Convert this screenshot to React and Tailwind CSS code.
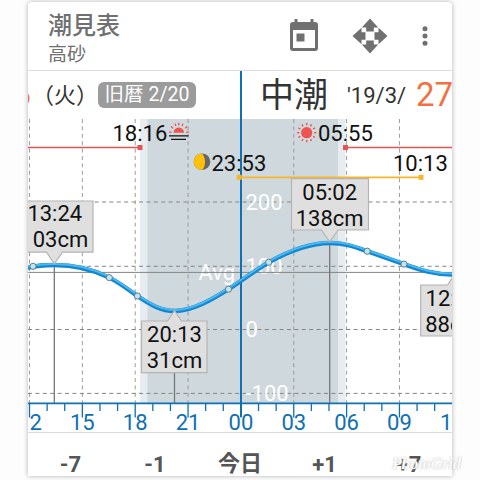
const HOURS = ["12", "15", "18", "21", "00", "03", "06", "09", "12"];
const LEVELS = [
  { y: 202, label: "200" },
  { y: 266.3, label: "100" },
  { y: 329.5, label: "0" },
  { y: 393.4, label: "-100" },
];
const POINTS = [
  [33, 266.3],
  [109.3, 277.6],
  [137.4, 296],
  [228.5, 289.2],
  [268.7, 262.3],
  [367.2, 251.2],
  [404, 264.1],
];
const CURVE =
  "M26 268 C36 265.5 45 265 54 265 C76 265 92 269 109.3 277.6 C121 283.5 128 289.5 137.4 296 C150 304.5 161 311 174.5 311 C193 311 213 299 228.5 289.2 C243 280 254 271 268.7 262.3 C290 250.5 312 243 330 243 C345 243 355 247 367.2 251.2 L404 264.1 C420 270 435 275 454 274.5";

const hourX = (i) => 29.5 + i * 52.85;

function Callout({ shape, x, y, time, level, levelX = x }) {
  return (
    <g>
      <path d={shape} fill="#dfdfdf" stroke="#b4b4b4" strokeWidth="1.2" />
      <text x={x} y={y} textAnchor="middle">{time}</text>
      <text x={levelX} y={y + 26} textAnchor="middle">{level}</text>
    </g>
  );
}

function Sun({ x, y, r }) {
  return (
    <g transform={`translate(${x} ${y})`}>
      <circle r={r} fill="#ef5350" />
      {[0, 30, 60, 90, 120, 150, 180, 210, 240, 270, 300, 330].map((a) => (
        <line key={a} y1={-r - 1.8} y2={-r - 4} stroke="#ef5350" strokeWidth="1.4" transform={`rotate(${a})`} />
      ))}
    </g>
  );
}

function TideChart() {
  return (
    <svg className="block h-[313px] w-[424px] font-[Roboto,sans-serif]" viewBox="28 119 424 313" fontSize="22" fill="#111">
      <rect x="140" y="119" width="205.5" height="284" fill="#e6ecef" />
      <rect x="147.5" y="119" width="190.5" height="284" fill="#cfd8dd" />

      <g stroke="#9c9c9c" strokeWidth="1" strokeDasharray="4 3.4">
        {HOURS.slice(0, 8).map((h, i) => (
          <line key={i} x1={hourX(i)} x2={hourX(i)} y1="119" y2="403" />
        ))}
        {LEVELS.map((l) => (
          <line key={l.label} x1="28" x2="452" y1={l.y} y2={l.y} stroke="#858585" />
        ))}
      </g>
      <g fill="#fff">
        {LEVELS.map((l) => (
          <text key={l.label} x="245.5" y={l.y + 7.5}>{l.label}</text>
        ))}
        <text x="198.5" y="279.5">Avg</text>
      </g>
      <line x1="28" x2="452" y1="272.4" y2="272.4" stroke="#858585" />

      {/* high / low water markers */}
      <g stroke="#777" strokeWidth="1.3">
        <line x1="54.3" x2="54.3" y1="265" y2="403" />
        <line x1="174.5" x2="174.5" y1="311" y2="403" />
        <line x1="329.7" x2="329.7" y1="243" y2="403" />
      </g>

      <line x1="241" x2="241" y1="119" y2="417" stroke="#0f70b2" strokeWidth="2" />

      {/* sun and moon spans */}
      <g stroke="#e25555" strokeWidth="1.3">
        <line x1="28" x2="140" y1="147.5" y2="147.5" />
        <line x1="345" x2="452" y1="147.5" y2="147.5" />
      </g>
      <rect x="137.5" y="145" width="5" height="5" fill="#e25555" />
      <rect x="343" y="145" width="5" height="5" fill="#e25555" />
      <line x1="239" x2="421" y1="177.3" y2="177.3" stroke="#f8b529" strokeWidth="1.8" />
      <rect x="236.7" y="174.8" width="5" height="5" fill="#f8b529" />
      <rect x="418.5" y="174.8" width="5" height="5" fill="#f8b529" />
      <text x="112.5" y="141">18:16</text>
      <text x="318" y="141">05:55</text>
      <text x="211.5" y="171">23:53</text>
      <text x="393" y="171">10:13</text>

      <Sun x={306.7} y={132.7} r={5.6} />
      <g>
        <path d="M173.5 132.8a5.3 5.3 0 0 1 10.6 0z" fill="#ef5350" />
        <path d="M169 131.9l2.6.4M171 126.5l2 1.8M175 123.8l.9 2.2M178.8 122.8v2.4M183 123.8l-.9 2.2M187.2 126.5l-2 1.8M188.8 131.9l-2.6.4" stroke="#ef5350" strokeWidth="1.3" />
        <path d="M169 135.8h19.5M171 139.3h15" stroke="#111" strokeWidth="1.3" />
      </g>
      <circle cx="202" cy="161.7" r="8.3" fill="#666" />
      <path d="M202 153.4a8.3 8.3 0 0 0 0 16.6c4-3.8 4-12.8 0-16.6z" fill="#ffc107" />

      <path d={CURVE} fill="none" stroke="#1187d2" strokeWidth="4.4" />
      <path d={CURVE} transform="translate(0 -1)" fill="none" stroke="#4db8f0" strokeWidth="2" />

      <Callout shape="M20 201H93V252.2H62.5L54.3 263.8L46.5 252.2H20Z" x={54.8} y={221} time="13:24" level="03cm" levelX={60.5} />
      <Callout shape="M141.5 321H167.5L174.5 310.5L181.5 321H207V372.7H141.5Z" x={174.5} y={342} time="20:13" level="31cm" />
      <Callout shape="M291.5 178.7H368.5V230H338L329.7 241.8L321.5 230H291.5Z" x={329.7} y={199.5} time="05:02" level="138cm" />
      <Callout shape="M420.7 285H447.5L454 275L460 285H487V336H420.7Z" x={453} y={305.5} time="12:04" level="88cm" />
      <g fill="#bce6f6" stroke="#57727e" strokeWidth=".9">
        {POINTS.map(([x, y]) => (
          <circle key={x} cx={x} cy={y} r="3.1" />
        ))}
      </g>

      {/* hour axis */}
      <g stroke="#0f70b2" strokeWidth="1.3">
        <line x1="28" x2="452" y1="403.4" y2="403.4" strokeWidth="1.7" />
        {Array.from({ length: 24 }, (_, i) => (
          <line key={i} x1={29.5 + i * 17.617} x2={29.5 + i * 17.617} y1="403" y2={i % 3 === 0 ? 417.5 : 411} />
        ))}
      </g>
      <g fill="#0f70b2">
        {HOURS.map((h, i) => (
          <text key={i} x={hourX(i)} y="430" textAnchor="middle">{h}</text>
        ))}
      </g>
    </svg>
  );
}

export default function App() {
  return (
    <div className="flex h-[480px] w-[480px] justify-center bg-[#fdfdfd] pt-0.5 font-[Roboto,'Noto_Sans_CJK_JP',sans-serif]">
      <div className="relative flex h-[474px] w-[424px] flex-col rounded-t bg-white shadow-[0_0_5px_rgba(0,0,0,0.3)]">
        <header className="flex h-[69px] shrink-0 items-center border-b border-[#dedede] pl-5 text-[#707070]">
          <div className="grow pt-[7px]">
            <h1 className="text-[24px] leading-[30px] font-medium">潮見表</h1>
            <p className="text-[19px] leading-[28px]">高砂</p>
          </div>
          <div className="flex items-center">
            <svg className="mr-[33px] h-[34px] w-[30px]" viewBox="0 0 30 34" fill="currentColor">
              <path fillRule="evenodd" d="M5.5 0h3v3h13V0h3v3h1.5a3 3 0 0 1 3 3v23a3 3 0 0 1-3 3H4a3 3 0 0 1-3-3V6a3 3 0 0 1 3-3h1.5zM4 11v18h22V11zM7.5 14.5h8v8h-8z" />
            </svg>
            <svg className="mr-[34px] h-9 w-9" viewBox="0 0 36 36" fill="currentColor">
              <path d="M18 .5l8.2 9h-4.4v4h-7.6v-4H9.8zM18 35.5l8.2-9h-4.4v-4h-7.6v4H9.8zM.5 18l9-8.2v4.4h4v7.6h-4v4.4zM35.5 18l-9-8.2v4.4h-4v7.6h4v4.4z" />
            </svg>
            <svg className="mr-[24px] h-5 w-[6px]" viewBox="0 0 6 20" fill="currentColor">
              <circle cx="3" cy="2.8" r="2.5" />
              <circle cx="3" cy="10" r="2.5" />
              <circle cx="3" cy="17.2" r="2.5" />
            </svg>
          </div>
        </header>

        <div className="flex h-12 shrink-0 overflow-hidden text-[#333]">
          <div className="flex w-[214px] shrink-0 items-center border-r-2 border-[#0f70b2]">
            <span className="flex w-2 justify-end overflow-hidden text-[32px] text-[#f27140]">
              <span className="mr-[5px]">6</span>
            </span>
            <span className="-ml-1 w-[66px] text-center text-[22px] whitespace-nowrap">（火）</span>
            <span className="flex h-[26px] w-[98px] items-center justify-center rounded-md bg-[#9b9b9b] text-[19.5px] whitespace-nowrap text-white">
              旧暦 2/20
            </span>
          </div>
          <div className="flex grow items-center pl-[18px] whitespace-nowrap">
            <span className="w-[87px] text-[34px]">中潮</span>
            <span className="w-[69px] text-[22px]">'19/3/</span>
            <span className="w-[36px] overflow-hidden text-[33px] text-[#f27140]">27</span>
          </div>
        </div>

        <div className="h-[313px] shrink-0 overflow-hidden">
          <TideChart />
        </div>

        <nav className="flex grow items-center border-t border-[#dcdcdc] pt-3.5 text-[22px] font-bold text-[#555]">
          <button className="w-[85px] text-center">-7</button>
          <button className="w-[84px] text-center">-1</button>
          <button className="w-[86px] pb-0.5 text-center">今日</button>
          <button className="w-[83px] text-center">+1</button>
          <button className="w-[86px] text-center">+7</button>
        </nav>
        <span className="absolute right-[-9px] bottom-1 font-['Liberation_Serif',serif] text-[16px] leading-4 font-bold text-[#fafafa] italic [text-shadow:0_0_2px_#bbb]">
          PhotoGrid
        </span>
      </div>
    </div>
  );
}
